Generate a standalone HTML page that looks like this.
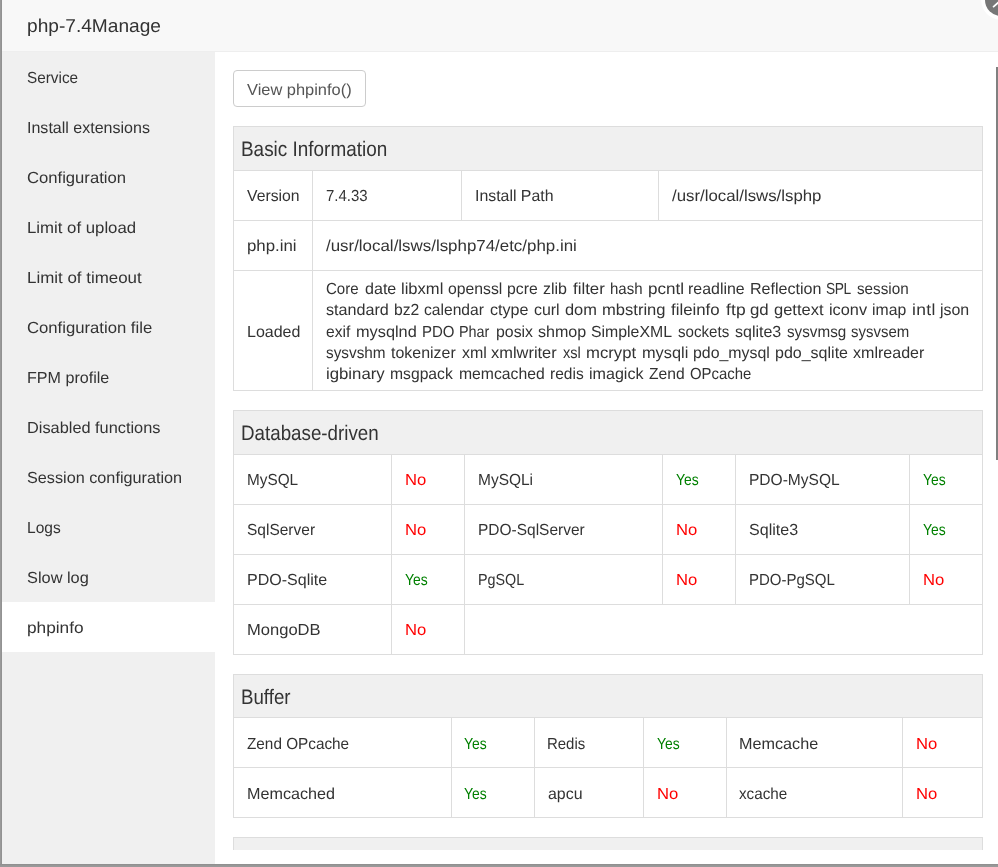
<!DOCTYPE html>
<html lang="en">
<head>
<meta charset="utf-8">
<title>php-7.4Manage</title>
<style>
*{box-sizing:border-box;margin:0;padding:0}
html,body{width:998px;height:867px;overflow:hidden;background:#999}
body{position:relative;font-family:"Liberation Sans","Noto Sans CJK SC",sans-serif;font-size:16px;color:#333;line-height:21px;text-rendering:geometricPrecision}
i{font-style:normal;display:block;position:absolute}
h1,h2{font-weight:normal;font-size:16px}
a{display:block;color:inherit;text-decoration:none}
button{font:inherit;text-rendering:inherit;letter-spacing:inherit;border:0;background:none;padding:0;margin:0;display:block;text-align:left}
span.c{display:block}
.l{background:#ddd}
#panel{position:absolute;left:2px;top:0;width:996px;height:864px;background:#fff;overflow:hidden;will-change:transform}
#head{position:absolute;left:0;top:0;width:996px;height:52px;background:#f8f8f8;border-bottom:1px solid #eee}
#side{position:absolute;left:0;top:52px;width:213px;height:812px;background:#f0f0f0}
#on{position:absolute;left:0;top:602px;width:213px;height:50px;background:#fff}
#btn{position:absolute;left:231px;top:70px;width:133px;height:37px;border:1px solid #ccc;border-radius:4px;background:#fff}
.c{position:absolute;white-space:nowrap;line-height:21px;height:21px;transform-origin:0 50%}
.t,.h{line-height:24px;height:24px}
h2.h{font-size:21px}
.b{color:#555}
.y{color:#008000}
.n{color:#ff0000}
#edgeL{position:absolute;left:0;top:0;width:2px;height:867px;background:linear-gradient(90deg,#9a9a9a 0,#9a9a9a 1px,#929292 1px,#929292 2px)}
#edgeB{position:absolute;left:0;top:864px;width:998px;height:3px;background:linear-gradient(180deg,#909090 0,#909090 1px,#979797 1px,#979797 2px,#999 2px,#999 3px)}
#sb{position:absolute;left:994px;top:67px;width:2px;height:393px;background:#808080}
</style>
</head>
<body>
<div id="panel">
<div id="head"></div>
<div id="side"></div>
<div id="on"></div>
<div id="btn"></div>

<i class="r" style="left:231px;top:126px;width:750px;height:265px;background:#fff;border:1px solid #ddd"></i>
<i class="r" style="left:232px;top:127px;width:748px;height:43px;background:#f0f0f0;"></i>
<i class="l" style="left:232px;top:170px;width:748px;height:1px"></i>
<i class="l" style="left:232px;top:220px;width:748px;height:1px"></i>
<i class="l" style="left:232px;top:270px;width:748px;height:1px"></i>
<i class="l" style="left:310px;top:171px;width:1px;height:219px"></i>
<i class="l" style="left:459px;top:171px;width:1px;height:49px"></i>
<i class="l" style="left:656px;top:171px;width:1px;height:49px"></i>
<i class="r" style="left:231px;top:410px;width:750px;height:245px;background:#fff;border:1px solid #ddd"></i>
<i class="r" style="left:232px;top:411px;width:748px;height:43px;background:#f0f0f0;"></i>
<i class="l" style="left:232px;top:454px;width:748px;height:1px"></i>
<i class="l" style="left:232px;top:504px;width:748px;height:1px"></i>
<i class="l" style="left:232px;top:554px;width:748px;height:1px"></i>
<i class="l" style="left:232px;top:604px;width:748px;height:1px"></i>
<i class="l" style="left:389px;top:455px;width:1px;height:199px"></i>
<i class="l" style="left:462px;top:455px;width:1px;height:199px"></i>
<i class="l" style="left:660px;top:455px;width:1px;height:149px"></i>
<i class="l" style="left:733px;top:455px;width:1px;height:149px"></i>
<i class="l" style="left:907px;top:455px;width:1px;height:149px"></i>
<i class="r" style="left:231px;top:674px;width:750px;height:144px;background:#fff;border:1px solid #ddd"></i>
<i class="r" style="left:232px;top:675px;width:748px;height:42px;background:#f0f0f0;"></i>
<i class="l" style="left:232px;top:717px;width:748px;height:1px"></i>
<i class="l" style="left:232px;top:767px;width:748px;height:1px"></i>
<i class="l" style="left:449px;top:718px;width:1px;height:99px"></i>
<i class="l" style="left:532px;top:718px;width:1px;height:99px"></i>
<i class="l" style="left:641px;top:718px;width:1px;height:99px"></i>
<i class="l" style="left:724px;top:718px;width:1px;height:99px"></i>
<i class="l" style="left:900px;top:718px;width:1px;height:99px"></i>
<i class="r" style="left:231px;top:837px;width:750px;height:13px;background:#f0f0f0;border:1px solid #ddd;border-bottom:0"></i>
<i class="r" style="left:213px;top:850px;width:783px;height:14px;background:#fff;"></i>
<header id="g-header">
<h1 class="c t" style="left:25.18px;top:14px;font-size:18.67px;transform:scaleX(1.0250);">php-7.4Manage</h1>
</header>
<nav id="g-nav">
<a class="c s" style="left:25.37px;top:68px;transform:scaleX(0.9577);">Service</a>
<a class="c s" style="left:24.77px;top:118px;transform:scaleX(1.0018);">Install extensions</a>
<a class="c s" style="left:25.39px;top:168px;transform:scaleX(1.0400);">Configuration</a>
<a class="c s" style="left:24.88px;top:218px;transform:scaleX(1.0483);">Limit of upload</a>
<a class="c s" style="left:24.87px;top:268px;transform:scaleX(1.0575);">Limit of timeout</a>
<a class="c s" style="left:25.38px;top:318px;transform:scaleX(1.0426);">Configuration file</a>
<a class="c s" style="left:24.94px;top:368px;transform:scaleX(1.0061);">FPM profile</a>
<a class="c s" style="left:24.92px;top:418px;transform:scaleX(1.0206);">Disabled functions</a>
<a class="c s" style="left:25.13px;top:468px;transform:scaleX(1.0139);">Session configuration</a>
<a class="c s" style="left:24.98px;top:518px;transform:scaleX(0.9711);">Logs</a>
<a class="c s" style="left:25.13px;top:568px;transform:scaleX(1.0218);">Slow log</a>
<a class="c s" style="left:25.10px;top:618px;transform:scaleX(1.0779);">phpinfo</a>
</nav>
<div id="g-toolbar">
<button class="c b" style="left:245.48px;top:80px;transform:scaleX(1.0258);">View phpinfo()</button>
</div>
<section id="g-basic">
<h2 class="c h" style="left:239.21px;top:138px;transform:scaleX(0.9012);">Basic Information</h2>
<div class="c" style="left:245.38px;top:186px;transform:scaleX(0.9850);">Version</div>
<div class="c" style="left:324.29px;top:186px;transform:scaleX(0.9344);">7.4.33</div>
<div class="c" style="left:472.68px;top:186px;transform:scaleX(0.9917);">Install Path</div>
<div class="c" style="left:669.53px;top:186px;transform:scaleX(1.0506);">/usr/local/lsws/lsphp</div>
<div class="c" style="left:244.83px;top:236px;transform:scaleX(1.0514);">php.ini</div>
<div class="c" style="left:324.13px;top:236px;transform:scaleX(1.0563);">/usr/local/lsws/lsphp74/etc/php.ini</div>
<div class="c" style="left:244.64px;top:322px;transform:scaleX(1.0005);">Loaded</div>
<span class="c w" style="left:324.47px;top:279px;transform:scaleX(0.9403);">Core</span>
<span class="c w" style="left:362.53px;top:279px;transform:scaleX(1.0045);">date</span>
<span class="c w" style="left:398.75px;top:279px;transform:scaleX(1.0346);">libxml</span>
<span class="c w" style="left:446.35px;top:279px;transform:scaleX(0.9851);">openssl</span>
<span class="c w" style="left:505.16px;top:279px;transform:scaleX(0.9849);">pcre</span>
<span class="c w" style="left:540.81px;top:279px;transform:scaleX(1.0010);">zlib</span>
<span class="c w" style="left:570.83px;top:279px;transform:scaleX(1.0525);">filter</span>
<span class="c w" style="left:608.22px;top:279px;transform:scaleX(0.9381);">hash</span>
<span class="c w" style="left:645.82px;top:279px;transform:scaleX(1.0660);">pcntl</span>
<span class="c w" style="left:686.41px;top:279px;transform:scaleX(0.9955);">readline</span>
<span class="c w" style="left:748.35px;top:279px;transform:scaleX(1.0046);">Reflection</span>
<span class="c w" style="left:824.20px;top:279px;letter-spacing:-0.52px;transform:scaleX(0.8600);">SPL</span>
<span class="c w" style="left:854.55px;top:279px;transform:scaleX(0.9530);">session</span>
<span class="c w" style="left:324.00px;top:300px;transform:scaleX(1.0090);">standard</span>
<span class="c w" style="left:392.02px;top:300px;transform:scaleX(0.9815);">bz2</span>
<span class="c w" style="left:422.16px;top:300px;transform:scaleX(0.9761);">calendar</span>
<span class="c w" style="left:487.94px;top:300px;transform:scaleX(1.0056);">ctype</span>
<span class="c w" style="left:531.90px;top:300px;transform:scaleX(0.9950);">curl</span>
<span class="c w" style="left:562.89px;top:300px;transform:scaleX(1.0252);">dom</span>
<span class="c w" style="left:600.11px;top:300px;transform:scaleX(1.0349);">mbstring</span>
<span class="c w" style="left:669.34px;top:300px;transform:scaleX(1.0506);">fileinfo</span>
<span class="c w" style="left:723.50px;top:300px;letter-spacing:0.13px;transform:scaleX(1.0900);">ftp</span>
<span class="c w" style="left:748.43px;top:300px;transform:scaleX(1.0532);">gd</span>
<span class="c w" style="left:771.96px;top:300px;transform:scaleX(1.0323);">gettext</span>
<span class="c w" style="left:826.82px;top:300px;transform:scaleX(1.0180);">iconv</span>
<span class="c w" style="left:869.95px;top:300px;transform:scaleX(0.9854);">imap</span>
<span class="c w" style="left:909.86px;top:300px;letter-spacing:0.31px;transform:scaleX(1.0900);">intl</span>
<span class="c w" style="left:937.74px;top:300px;transform:scaleX(0.9952);">json</span>
<span class="c w" style="left:323.95px;top:322px;transform:scaleX(0.9774);">exif</span>
<span class="c w" style="left:354.11px;top:322px;transform:scaleX(1.0190);">mysqlnd</span>
<span class="c w" style="left:419.93px;top:322px;transform:scaleX(0.9372);">PDO</span>
<span class="c w" style="left:457.11px;top:322px;transform:scaleX(0.8997);">Phar</span>
<span class="c w" style="left:494.08px;top:322px;transform:scaleX(0.9913);">posix</span>
<span class="c w" style="left:536.22px;top:322px;transform:scaleX(1.0047);">shmop</span>
<span class="c w" style="left:589.41px;top:322px;transform:scaleX(0.9899);">SimpleXML</span>
<span class="c w" style="left:675.81px;top:322px;transform:scaleX(0.9439);">sockets</span>
<span class="c w" style="left:732.84px;top:322px;transform:scaleX(0.9997);">sqlite3</span>
<span class="c w" style="left:784.83px;top:322px;transform:scaleX(0.9515);">sysvmsg</span>
<span class="c w" style="left:849.45px;top:322px;transform:scaleX(0.9354);">sysvsem</span>
<span class="c w" style="left:324.04px;top:343px;transform:scaleX(0.9571);">sysvshm</span>
<span class="c w" style="left:389.03px;top:343px;transform:scaleX(0.9964);">tokenizer</span>
<span class="c w" style="left:459.80px;top:343px;transform:scaleX(0.9979);">xml</span>
<span class="c w" style="left:489.47px;top:343px;transform:scaleX(1.0266);">xmlwriter</span>
<span class="c w" style="left:561.09px;top:343px;transform:scaleX(0.9139);">xsl</span>
<span class="c w" style="left:583.92px;top:343px;transform:scaleX(1.0432);">mcrypt</span>
<span class="c w" style="left:639.65px;top:343px;transform:scaleX(1.0205);">mysqli</span>
<span class="c w" style="left:690.69px;top:343px;transform:scaleX(0.9928);">pdo_mysql</span>
<span class="c w" style="left:772.96px;top:343px;transform:scaleX(1.0004);">pdo_sqlite</span>
<span class="c w" style="left:851.22px;top:343px;transform:scaleX(1.0033);">xmlreader</span>
<span class="c w" style="left:323.53px;top:364px;transform:scaleX(1.0474);">igbinary</span>
<span class="c w" style="left:388.05px;top:364px;transform:scaleX(0.9803);">msgpack</span>
<span class="c w" style="left:456.69px;top:364px;transform:scaleX(0.9832);">memcached</span>
<span class="c w" style="left:548.24px;top:364px;transform:scaleX(0.9700);">redis</span>
<span class="c w" style="left:587.23px;top:364px;transform:scaleX(1.0054);">imagick</span>
<span class="c w" style="left:647.31px;top:364px;transform:scaleX(0.9780);">Zend</span>
<span class="c w" style="left:688.47px;top:364px;transform:scaleX(0.9310);">OPcache</span>
</section>
<section id="g-db">
<h2 class="c h" style="left:239.22px;top:422px;transform:scaleX(0.8935);">Database-driven</h2>
<div class="c" style="left:244.60px;top:470px;transform:scaleX(0.9579);">MySQL</div>
<div class="c n" style="left:402.69px;top:470px;transform:scaleX(1.0387);">No</div>
<div class="c" style="left:475.59px;top:470px;transform:scaleX(0.9674);">MySQLi</div>
<div class="c y" style="left:673.98px;top:470px;transform:scaleX(0.8688);">Yes</div>
<div class="c" style="left:746.88px;top:470px;transform:scaleX(0.9718);">PDO-MySQL</div>
<div class="c y" style="left:920.98px;top:470px;transform:scaleX(0.8688);">Yes</div>
<div class="c" style="left:244.75px;top:520px;transform:scaleX(0.9685);">SqlServer</div>
<div class="c n" style="left:402.69px;top:520px;transform:scaleX(1.0387);">No</div>
<div class="c" style="left:475.59px;top:520px;transform:scaleX(0.9674);">PDO-SqlServer</div>
<div class="c n" style="left:673.99px;top:520px;transform:scaleX(1.0387);">No</div>
<div class="c" style="left:747.04px;top:520px;transform:scaleX(1.0028);">Sqlite3</div>
<div class="c y" style="left:920.98px;top:520px;transform:scaleX(0.8688);">Yes</div>
<div class="c" style="left:244.54px;top:570px;transform:scaleX(1.0017);">PDO-Sqlite</div>
<div class="c y" style="left:402.68px;top:570px;transform:scaleX(0.8688);">Yes</div>
<div class="c" style="left:475.68px;top:570px;transform:scaleX(0.8956);">PgSQL</div>
<div class="c n" style="left:673.99px;top:570px;transform:scaleX(1.0387);">No</div>
<div class="c" style="left:746.92px;top:570px;transform:scaleX(0.9374);">PDO-PgSQL</div>
<div class="c n" style="left:920.99px;top:570px;transform:scaleX(1.0387);">No</div>
<div class="c" style="left:244.50px;top:620px;transform:scaleX(1.0342);">MongoDB</div>
<div class="c n" style="left:402.69px;top:620px;transform:scaleX(1.0387);">No</div>
</section>
<section id="g-buffer">
<h2 class="c h" style="left:239.23px;top:686px;transform:scaleX(0.8892);">Buffer</h2>
<div class="c" style="left:245.36px;top:734px;transform:scaleX(0.9570);">Zend OPcache</div>
<div class="c y" style="left:462.48px;top:734px;transform:scaleX(0.8688);">Yes</div>
<div class="c" style="left:545.43px;top:734px;transform:scaleX(0.9350);">Redis</div>
<div class="c y" style="left:654.68px;top:734px;transform:scaleX(0.8688);">Yes</div>
<div class="c" style="left:736.53px;top:734px;transform:scaleX(1.0116);">Memcache</div>
<div class="c n" style="left:913.89px;top:734px;transform:scaleX(1.0387);">No</div>
<div class="c" style="left:244.53px;top:784px;transform:scaleX(1.0100);">Memcached</div>
<div class="c y" style="left:462.48px;top:784px;transform:scaleX(0.8688);">Yes</div>
<div class="c" style="left:545.92px;top:784px;transform:scaleX(0.9947);">apcu</div>
<div class="c n" style="left:654.69px;top:784px;transform:scaleX(1.0387);">No</div>
<div class="c" style="left:737.35px;top:784px;transform:scaleX(0.9511);">xcache</div>
<div class="c n" style="left:913.89px;top:784px;transform:scaleX(1.0387);">No</div>
</section>
<div id="sb"></div>
<svg style="position:absolute;left:976px;top:0" width="20" height="22" viewBox="978 0 20 22">
<circle cx="1001" cy="0" r="19.8" fill="#fff"/>
<circle cx="1001" cy="0" r="16" fill="#777"/>
<path d="M993.6 6.6 L1008.4 -6.6 M993.6 -6.6 L1008.4 6.6" stroke="#fff" stroke-width="1.8" stroke-linecap="round" fill="none"/>
</svg>
</div>
<div id="edgeL"></div>
<div id="edgeB"></div>
</body>
</html>
